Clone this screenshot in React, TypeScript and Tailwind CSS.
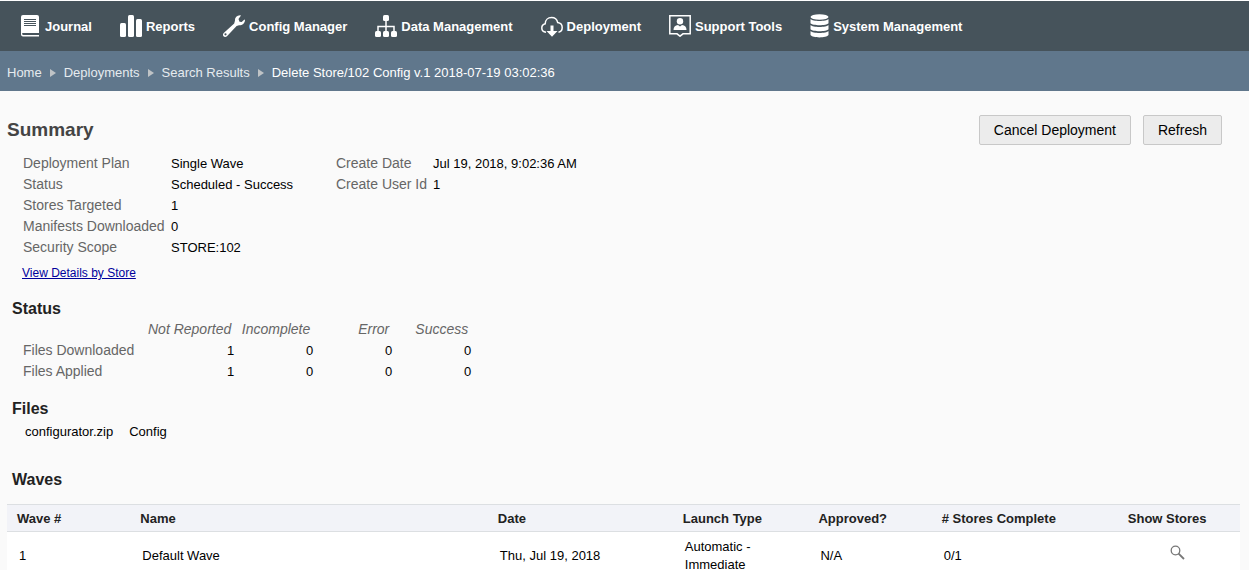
import React from 'react';

interface SummaryItem {
    label: string;
    value: string;
}

interface NavItem {
    label: string;
    icon: React.ReactNode;
}

const JournalIcon = () => (
    <svg width="20" height="22" viewBox="0 0 20 22" fill="white">
        <path d="M2 0h14a2 2 0 0 1 2 2v16H0V2a2 2 0 0 1 2-2z" />
        <path d="M0 17v2.500a2 2 0 0 0 2 2h16v-1.500H2.500a1.300 1.300 0 0 1-1.300-1.500V17z" />
        <path d="M3 4.500h12M3 6.500h12M3 8.500h12M3 10.500h12" stroke="#46535b" strokeWidth="1" />
    </svg>
);

const ReportsIcon = () => (
    <svg width="22" height="22" viewBox="0 0 22 22" fill="white">
        <rect x="0" y="8" width="6" height="14" rx="1.500" />
        <rect x="8" y="0" width="6" height="22" rx="1.500" />
        <rect x="16" y="4" width="6" height="18" rx="1.500" />
    </svg>
);

const WrenchIcon = () => (
    <svg width="22" height="22" viewBox="0 0 22 22" fill="white">
        <path
            fillRule="evenodd"
            d="M17 .3l1 .2-2.500 3.500 1 2.700 2.200.3 2.700-2.600.6.500c-.2 3.200-2.500 5.500-6 5.400l-2.400.6-9.400 10c-1.100 1.300-2.800 1.300-3.700.4-.9-1-.7-2.600.5-3.600l10.200-9.200.8-3C11.700 2.800 13.500.7 17 .3zM2.500 18.200a1.100 1.100 0 1 0 0 2.200 1.100 1.100 0 0 0 0-2.200z"
        />
    </svg>
);

const SitemapIcon = () => (
    <svg width="22" height="22" viewBox="0 0 22 22" fill="white">
        <rect x="8" y="0" width="6" height="6" rx="1.500" />
        <rect x="0" y="16" width="6" height="6" rx="1.500" />
        <rect x="8" y="16" width="6" height="6" rx="1.500" />
        <rect x="16" y="16" width="6" height="6" rx="1.500" />
        <path d="M11 5v12M3 17v-5.500h16V17" fill="none" stroke="white" strokeWidth="1.500" />
    </svg>
);

const CloudIcon = () => (
    <svg width="22" height="22" viewBox="0 0 22 22" fill="none" stroke="white" strokeWidth="1.500">
        <path d="M5 17.200C2.600 17 .8 15.500.8 13c0-2.300 1.500-3.800 3.400-4.200C4.300 5 7 2.600 10.500 2.600c3.300 0 5.600 2 6.200 5 2.600.4 4.500 2.300 4.500 4.900 0 2.500-1.500 4.300-3.700 4.700" />
        <path d="M9.500 10.500h3V16h4L11 21.800 5.500 16h4z" fill="white" stroke="none" />
    </svg>
);

const SupportIcon = () => (
    <svg width="22" height="22" viewBox="0 0 22 22" fill="white">
        <path d="M.8.800h20.400v18H14L11 21.200 8 18.800H.8z" fill="none" stroke="white" strokeWidth="1.500" />
        <circle cx="11" cy="6.200" r="3.200" />
        <path d="M4.500 15c0-3 1.500-4.300 4.500-4.900l2 1.300 2-1.300c3 .6 4.500 1.900 4.500 4.900z" />
    </svg>
);

const DatabaseIcon = () => (
    <svg width="19" height="24" viewBox="0 0 19 24" fill="white">
        <ellipse cx="9.500" cy="3" rx="9" ry="2.800" />
        <path d="M.5 5c2 2.600 16 2.600 18 0v4.200c-2 2.600-16 2.600-18 0z" />
        <path d="M.5 11c2 2.600 16 2.600 18 0v4.200c-2 2.600-16 2.600-18 0z" />
        <path d="M.5 17c2 2.600 16 2.600 18 0v4c-2 3.200-16 3.200-18 0z" />
    </svg>
);

const navItems: NavItem[] = [
    { label: 'Journal', icon: <JournalIcon /> },
    { label: 'Reports', icon: <ReportsIcon /> },
    { label: 'Config Manager', icon: <WrenchIcon /> },
    { label: 'Data Management', icon: <SitemapIcon /> },
    { label: 'Deployment', icon: <CloudIcon /> },
    { label: 'Support Tools', icon: <SupportIcon /> },
    { label: 'System Management', icon: <DatabaseIcon /> },
];

const crumbs = ['Home', 'Deployments', 'Search Results'];

const planItems: SummaryItem[] = [
    { label: 'Deployment Plan', value: 'Single Wave' },
    { label: 'Status', value: 'Scheduled - Success' },
    { label: 'Stores Targeted', value: '1' },
    { label: 'Manifests Downloaded', value: '0' },
    { label: 'Security Scope', value: 'STORE:102' },
];

const createItems: SummaryItem[] = [
    { label: 'Create Date', value: 'Jul 19, 2018, 9:02:36 AM' },
    { label: 'Create User Id', value: '1' },
];

const statusColumns = ['Not Reported', 'Incomplete', 'Error', 'Success'];

const statusRows = [
    { label: 'Files Downloaded', counts: [1, 0, 0, 0] },
    { label: 'Files Applied', counts: [1, 0, 0, 0] },
];

// Header cells carry their share of the table width
const waveColumns = [
    { label: 'Wave #', className: 'w-[10%] pt-0.5 pl-[10px]' },
    { label: 'Name', className: 'w-[29%] pt-0.5 pl-[10px]' },
    { label: 'Date', className: 'w-[15%] pt-0.5 pl-[10px]' },
    { label: 'Launch Type', className: 'w-[11%] pt-0.5 pl-[10px]' },
    { label: 'Approved?', className: 'w-[10%] pt-0.5 pl-[10px]' },
    { label: '# Stores Complete', className: 'w-[14%] pt-0.5 pl-[10px]' },
    { label: 'Show Stores', className: 'w-[11%] pt-0.5 pr-[10px] text-center' },
];

const SummaryList: React.FC<{ items: SummaryItem[]; className: string }> = ({ items, className }) => (
    <dl className={`grid auto-rows-[21px] content-start leading-[21px] ${className}`}>
        {items.map((item) => (
            <React.Fragment key={item.label}>
                <dt className="text-sm leading-[21px] text-[#666]">{item.label}</dt>
                <dd>{item.value}</dd>
            </React.Fragment>
        ))}
    </dl>
);

const App: React.FC = () => {
    return (
        <div className="min-h-screen bg-[#fafafa] font-['Liberation_Sans',Arial,sans-serif] text-[13px] text-black">
            {/* Main menu */}
            <nav className="flex h-[51px] items-center gap-7 border-t border-white bg-[#46535b] pl-[21px]">
                {navItems.map((item) => (
                    <a key={item.label} href="#" className="flex items-center gap-1 font-bold whitespace-nowrap text-white">
                        {item.icon}
                        <span className="pt-px">{item.label}</span>
                    </a>
                ))}
            </nav>

            {/* Breadcrumb */}
            <div className="flex h-10 items-center gap-2 bg-[#60778c] px-[7px] pt-[3px] text-[#e6ebef]">
                {crumbs.map((crumb) => (
                    <React.Fragment key={crumb}>
                        <a href="#">{crumb}</a>
                        <svg width="6" height="8" viewBox="0 0 6 8" fill="#bfc3c6">
                            <path d="M0 0l6 4-6 4z" />
                        </svg>
                    </React.Fragment>
                ))}
                <span className="text-white">Delete Store/102 Config v.1 2018-07-19 03:02:36</span>
            </div>

            <main className="pt-6 pr-[9px] pl-[7px]">
                <div className="flex items-start justify-between pr-[18px]">
                    <h1 className="text-[19px] leading-[30px] font-bold text-[#444]">Summary</h1>
                    <div className="flex gap-3 text-sm">
                        <button className="h-[30px] rounded-xs border border-[#c8c8c8] bg-[#ececec] px-3.5">Cancel Deployment</button>
                        <button className="h-[30px] rounded-xs border border-[#c8c8c8] bg-[#ececec] px-3.5">Refresh</button>
                    </div>
                </div>

                <div className="mt-2 flex gap-10 pl-4">
                    <SummaryList items={planItems} className="grid-cols-[148px_125px]" />
                    <SummaryList items={createItems} className="grid-cols-[97px_auto]" />
                </div>
                <a href="#" className="mt-1.5 ml-[15px] inline-block text-xs leading-[18px] text-[#00009c] underline">
                    View Details by Store
                </a>

                <h2 className="mt-4 ml-[5px] text-base leading-5 font-bold text-[#222]">Status</h2>
                <table className="ml-4 border-collapse leading-[21px]">
                    <thead>
                        <tr className="text-sm leading-[21px] text-[#666]">
                            <td className="w-[119px]"></td>
                            {statusColumns.map((column) => (
                                <th key={column} scope="col" className="min-w-[79px] pr-[3px] pl-1.5 text-right font-normal whitespace-nowrap italic">{column}</th>
                            ))}
                        </tr>
                    </thead>
                    <tbody>
                        {statusRows.map((row) => (
                            <tr key={row.label}>
                                <th scope="row" className="text-left text-sm leading-[21px] font-normal text-[#666]">{row.label}</th>
                                {row.counts.map((count, i) => (
                                    <td key={i} className="text-right">{count}</td>
                                ))}
                            </tr>
                        ))}
                    </tbody>
                </table>

                <h2 className="mt-[17px] ml-[5px] text-base leading-5 font-bold text-[#222]">Files</h2>
                <div className="mt-1 ml-[18px] flex gap-4 leading-[18px]">
                    <span>configurator.zip</span>
                    <span>Config</span>
                </div>

                <h2 className="mt-7 ml-[5px] text-base leading-[22px] font-bold text-[#222]">Waves</h2>
                <table className="mt-[13px] w-full table-fixed border-collapse">
                    <thead>
                        <tr className="h-[27px] border-y border-[#dcdfe2] bg-[#f2f3f8] text-left text-[#222]">
                            {waveColumns.map((column) => (
                                <th key={column.label} scope="col" className={column.className}>{column.label}</th>
                            ))}
                        </tr>
                    </thead>
                    <tbody>
                        <tr className="h-[50px] bg-white leading-[18px]">
                            <td className="pl-3">1</td>
                            <td className="pl-3">Default Wave</td>
                            <td className="pl-3">Thu, Jul 19, 2018</td>
                            <td className="pl-3">Automatic - Immediate</td>
                            <td className="pl-3">N/A</td>
                            <td className="pl-3">0/1</td>
                            <td className="pl-2.5 text-center">
                                <button aria-label="Show Stores" className="pb-2 align-middle">
                                    <svg width="15" height="15" viewBox="0 0 15 15" fill="none" stroke="#777">
                                        <circle cx="5.500" cy="5.500" r="4.300" strokeWidth="1.300" />
                                        <path d="M8.600 8.600l5.400 5.400" strokeWidth="1.800" />
                                    </svg>
                                </button>
                            </td>
                        </tr>
                    </tbody>
                </table>
            </main>
        </div>
    );
};

export default App;
